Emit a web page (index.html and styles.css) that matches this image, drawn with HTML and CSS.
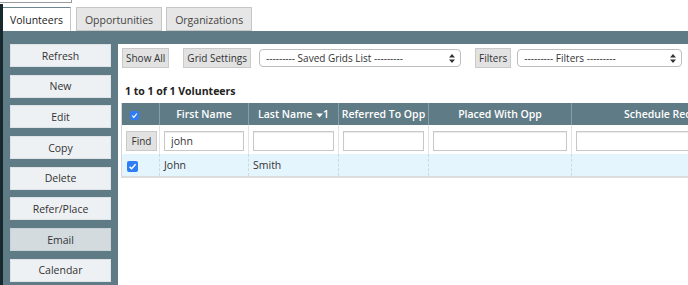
FILE: index.html
```html
<!DOCTYPE html>
<html lang="en">
<head>
  <meta charset="UTF-8" />
  <meta name="viewport" content="width=device-width, initial-scale=1.0" />
  <title>Volunteers</title>
  <link rel="stylesheet" href="styles.css">
</head>
<body>
  <div class="crumb"></div>
  <div class="frame">
    <div class="edge"></div>
    <div class="app">
      <nav class="tabs">
        <a class="tab active">Volunteers</a>
        <a class="tab">Opportunities</a>
        <a class="tab">Organizations</a>
      </nav>
      <div class="panel">
        <div class="sidebar">
          <button class="side-btn">Refresh</button>
          <button class="side-btn">New</button>
          <button class="side-btn">Edit</button>
          <button class="side-btn">Copy</button>
          <button class="side-btn">Delete</button>
          <button class="side-btn">Refer/Place</button>
          <button class="side-btn hover">Email</button>
          <button class="side-btn">Calendar</button>
        </div>
        <div class="content">
          <div class="toolbar">
            <button class="tool-btn">Show All</button>
            <button class="tool-btn gap-left">Grid Settings</button>
            <div class="select saved">
              <span>--------- Saved Grids List ---------</span>
              <svg class="arrows" width="6" height="9" viewBox="0 0 6 9"><path d="M3 0L6 3.5H0Z M3 9L6 5.5H0Z" fill="#333"/></svg>
            </div>
            <button class="tool-btn gap-left">Filters</button>
            <div class="select filters">
              <span>--------- Filters ---------</span>
              <svg class="arrows" width="6" height="9" viewBox="0 0 6 9"><path d="M3 0L6 3.5H0Z M3 9L6 5.5H0Z" fill="#333"/></svg>
            </div>
          </div>
          <div class="count">1 to 1 of 1 Volunteers</div>
          <table class="grid">
            <colgroup>
              <col style="width: 38px">
              <col style="width: 89px">
              <col style="width: 90px">
              <col style="width: 90px">
              <col style="width: 143px">
              <col style="width: 200px">
            </colgroup>
            <thead>
              <tr>
                <th class="cb-head"><span class="check small"><svg viewBox="0 0 10 10"><path d="M2.5 5.2L4.3 7L7.6 3" fill="none" stroke="#fff" stroke-width="1.3"/></svg></span></th>
                <th>First Name</th>
                <th>Last Name <svg class="sort" width="7" height="6" viewBox="0 0 7 6"><path d="M0 1.5H7L3.5 5.5Z" fill="#fff"/></svg>1</th>
                <th>Referred To Opp</th>
                <th>Placed With Opp</th>
                <th>Schedule Requests</th>
              </tr>
            </thead>
            <tbody>
              <tr class="filter-row">
                <td><button class="tool-btn find">Find</button></td>
                <td><input class="filter" type="text" value="john"></td>
                <td><input class="filter" type="text"></td>
                <td><input class="filter" type="text"></td>
                <td><input class="filter" type="text"></td>
                <td><input class="filter" type="text"></td>
              </tr>
              <tr class="data-row">
                <td class="cb-cell"><span class="check"><svg viewBox="0 0 10 10"><path d="M2.3 5.2L4.2 7.1L7.8 2.9" fill="none" stroke="#fff" stroke-width="1.3"/></svg></span></td>
                <td>John</td>
                <td>Smith</td>
                <td></td>
                <td></td>
                <td></td>
              </tr>
            </tbody>
          </table>
        </div>
      </div>
    </div>
  </div>
</body>
</html>
```

FILE: styles.css
```css
body {
  margin: 0;
  width: 688px;
  height: 285px;
  overflow: hidden;
  font-family: "Open Sans", "Liberation Sans", sans-serif;
  color: #333;
  background-color: white;
}

.crumb {
  width: 71px;
  height: 2px;
  border-bottom: 1px solid #9a9a9a;
  border-right: 1px solid #9a9a9a;
}

.frame {
  display: flex;
  height: 282px;
  margin-top: 1px;
}

.edge {
  width: 3px;
  background-color: #17292d;
}

.app {
  flex: 1;
  display: flex;
  flex-direction: column;
  min-width: 0;
}

.tabs {
  display: flex;
  align-items: flex-start;
  gap: 4px;
  height: 27px;
  padding-top: 3px;
  box-sizing: border-box;
}

.tab {
  height: 22px;
  line-height: 24px;
  padding: 0 8px;
  font-size: 10.5px;
  background-color: #e6e6e6;
  border: 1px solid #c6c6c6;
  color: #444;
}

.tab.active {
  height: 24px;
  padding: 0 7px;
  background-color: white;
  border: none;
  border-top: 1px solid #6c8790;
  border-right: 1px solid #c6c6c6;
  color: #222;
  margin-right: 1px;
}

.panel {
  flex: 1;
  display: flex;
  gap: 7px;
  padding: 13px 0 0 7px;
  background-color: #5f7b85;
  min-height: 0;
}

.sidebar {
  width: 101px;
  flex: none;
  display: flex;
  flex-direction: column;
  gap: 7.7px;
}

.side-btn {
  height: 23px;
  padding: 0;
  font-family: inherit;
  font-size: 10.5px;
  color: #333;
  background-color: #eef1f3;
  border: 1px solid #dde3e6;
}

.side-btn.hover {
  background-color: #d3dbdf;
  border-color: #c9d2d6;
}

.content {
  flex: 1;
  min-width: 0;
  background-color: white;
  padding-top: 4px;
  overflow: hidden;
}

.toolbar {
  display: flex;
  align-items: center;
  padding-left: 4px;
  height: 20px;
}

.tool-btn {
  height: 20px;
  padding: 0 3px;
  font-family: inherit;
  font-size: 10px;
  color: #333;
  background-color: #e2e2e2;
  border: 1px solid #cacaca;
}

.gap-left {
  margin-left: 14px;
}

.select {
  display: flex;
  align-items: center;
  justify-content: space-between;
  height: 18px;
  box-sizing: border-box;
  padding: 0 5px 0 6px;
  font-size: 10px;
  color: #333;
  border: 1px solid #bdbdbd;
  border-radius: 4px;
  background-color: white;
}

.select.saved {
  width: 202px;
  margin-left: 8px;
}

.select.filters {
  width: 165px;
  margin-left: 6px;
}

.count {
  padding: 16px 0 0 7px;
  height: 19px;
  font-size: 10.5px;
  font-weight: 700;
  color: #222;
}

.grid {
  margin-left: 3px;
  border-collapse: collapse;
  table-layout: fixed;
  width: 650px;
  border-left: 1px solid #d6d6d6;
}

.grid th {
  height: 22px;
  padding: 0;
  font-size: 10.5px;
  font-weight: 600;
  color: white;
  background-color: #5f7b85;
  border-right: 1px solid #86a0a8;
  white-space: nowrap;
  overflow: hidden;
}

.grid th.cb-head {
  text-align: left;
  padding-left: 8px;
}

.sort {
  margin-left: 1px;
  vertical-align: 0;
}

.filter-row td {
  height: 29px;
  padding: 0 4px;
  box-sizing: border-box;
  border-right: 1px solid #e4e4e4;
}

.find {
  width: 31px;
  padding: 0;
}

.filter {
  width: 100%;
  height: 20px;
  box-sizing: border-box;
  padding: 0 6px;
  font-family: inherit;
  font-size: 10.5px;
  color: #333;
  border: 1px solid #c8c8c8;
  box-shadow: inset 0 1px 1px rgba(0, 0, 0, 0.08);
}

.data-row td {
  height: 22px;
  padding: 0 0 0 4px;
  font-size: 10.5px;
  color: #333;
  background-color: #e5f5fd;
  border-right: 1px dashed #cfd9de;
  border-bottom: 2px solid #dcdcdc;
}

.data-row td.cb-cell {
  padding-left: 5px;
}

.check {
  display: inline-block;
  width: 11px;
  height: 11px;
  border-radius: 2px;
  background-color: #2f7df6;
  vertical-align: middle;
}

.check.small {
  width: 9px;
  height: 9px;
}

.check svg {
  display: block;
  width: 100%;
  height: 100%;
}
```
